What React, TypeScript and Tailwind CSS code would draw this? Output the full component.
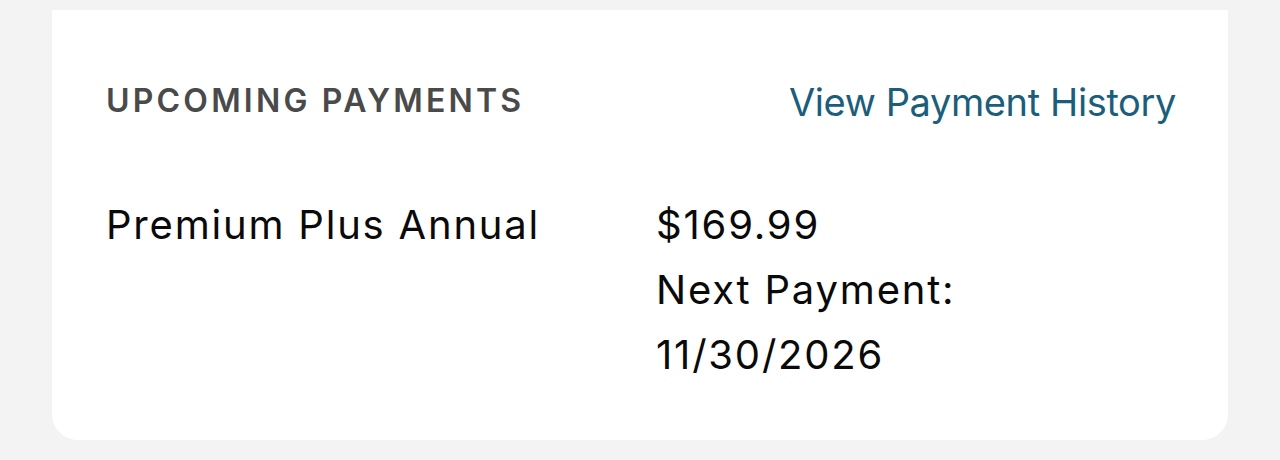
export default function App() {
  return (
    <div className="min-h-screen bg-[#f3f3f3] px-[52px] pt-[10px] font-['Inter',sans-serif]">
      <div className="bg-white rounded-b-[26px] h-[430px] pl-[54px] pr-[52px] pt-[73px]">
        {/* Header */}
        <div className="flex items-start justify-between">
          <h2 className="mt-[2px] text-[32px] leading-[32px] font-semibold tracking-[0.1em] text-[#4a4a4a]">
            UPCOMING PAYMENTS
          </h2>
          <a href="#" className="text-[38px] leading-[38px] tracking-[-0.01em] text-[#1b5e7b]">
            View Payment History
          </a>
        </div>

        {/* Payment row */}
        <div className="flex mt-[71px] text-[40px] leading-[65px] tracking-[0.045em] text-[#0a0a0a]">
          <div className="w-[550px]">Premium Plus Annual</div>
          <div className="flex flex-col">
            <span>$169.99</span>
            <span>Next Payment:</span>
            <span>11/30/2026</span>
          </div>
        </div>
      </div>
    </div>
  );
}
